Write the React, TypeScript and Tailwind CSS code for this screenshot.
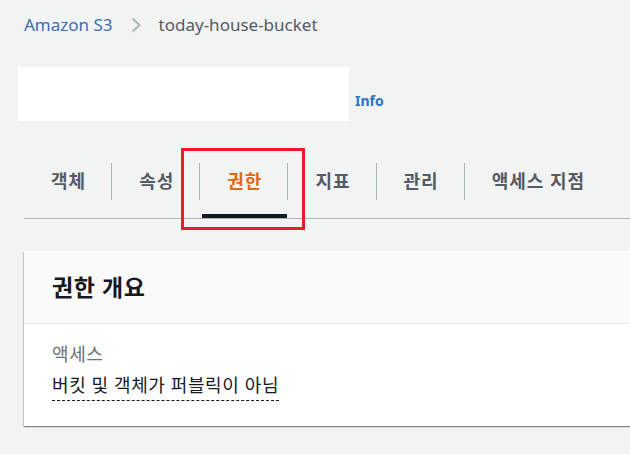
import React from 'react';

const tabs = ['객체', '속성', '권한', '지표', '관리', '액세스 지점'];
const activeTab = '권한';

const font = { fontFamily: '"Noto Sans", "Noto Sans CJK KR", sans-serif' };

const Chevron: React.FC = () => (
  <svg width="12" height="16" viewBox="0 0 12 16" fill="none">
    <path d="M2.5 1.5 L9.5 8 L2.5 14.5" stroke="#aab7b8" strokeWidth="2" />
  </svg>
);

export default function App() {
  return (
    <div className="relative min-h-[454px] w-full overflow-hidden bg-[#f2f3f3]" style={font}>
      {/* breadcrumb */}
      <div className="mt-[14px] flex h-[22px] items-center gap-[17px] pl-6 text-[17px] leading-[22px]">
        <span className="text-[#3b6cb4]">Amazon S3</span>
        <Chevron />
        <span className="text-[#545b64]">today-house-bucket</span>
      </div>

      {/* bucket title row (name blanked out) */}
      <div className="mt-[31px] flex items-end">
        <div className="ml-[18px] h-[54px] w-[331px] bg-white" />
        <span className="mb-[12px] ml-[6px] text-[14px] font-bold leading-[16px] text-[#2b73c6]">Info</span>
      </div>

      {/* tabs */}
      <div className="ml-6 mt-[23px] flex h-[75px] border-b border-[#aab7b8]">
        {tabs.map((t, i) => (
          <React.Fragment key={t}>
            {i > 0 && <div className="h-[37px] w-px self-center bg-[#aab7b8]" />}
            <div className="relative flex items-center pl-[27px] pr-[25px]">
              <span
                className={
                  'text-[18px] font-bold leading-[20px] tracking-[1px] ' +
                  (t === activeTab ? 'text-[#dd6b10]' : 'text-[#545b64]')
                }
              >
                {t}
              </span>
              {t === activeTab && <div className="absolute bottom-0 left-[2px] right-[0px] h-[4px] bg-[#16191f]" />}
            </div>
          </React.Fragment>
        ))}
      </div>

      {/* card */}
      <div className="ml-6 mt-[32px] w-[640px] bg-white shadow-[0_1px_1px_0_rgba(0,28,36,0.3),1px_1px_1px_0_rgba(0,28,36,0.15),-1px_1px_1px_0_rgba(0,28,36,0.15)]">
        <div className="flex h-[73px] items-center border-b border-[#eaeded] bg-[#fafafa] pl-7">
          <h2 className="text-[23px] font-bold leading-none tracking-[0.6px] text-[#16191f]">권한 개요</h2>
        </div>
        <div className="px-7 pb-[25px] pt-[20px]">
          <div className="text-[18px] leading-[20px] tracking-[0.6px] text-[#687078]">액세스</div>
          <div className="mt-[10px]">
            <span className="inline-block border-b border-dashed border-[#16191f] pb-[4px] text-[18px] leading-[22px] tracking-[0.6px] text-[#16191f]">
              버킷 및 객체가 퍼블릭이 아님
            </span>
          </div>
        </div>
      </div>

      {/* red highlight annotation */}
      <div className="pointer-events-none absolute left-[181px] top-[148px] h-[82px] w-[124px] border-[3px] border-[#ed1c24]" />
    </div>
  );
}
